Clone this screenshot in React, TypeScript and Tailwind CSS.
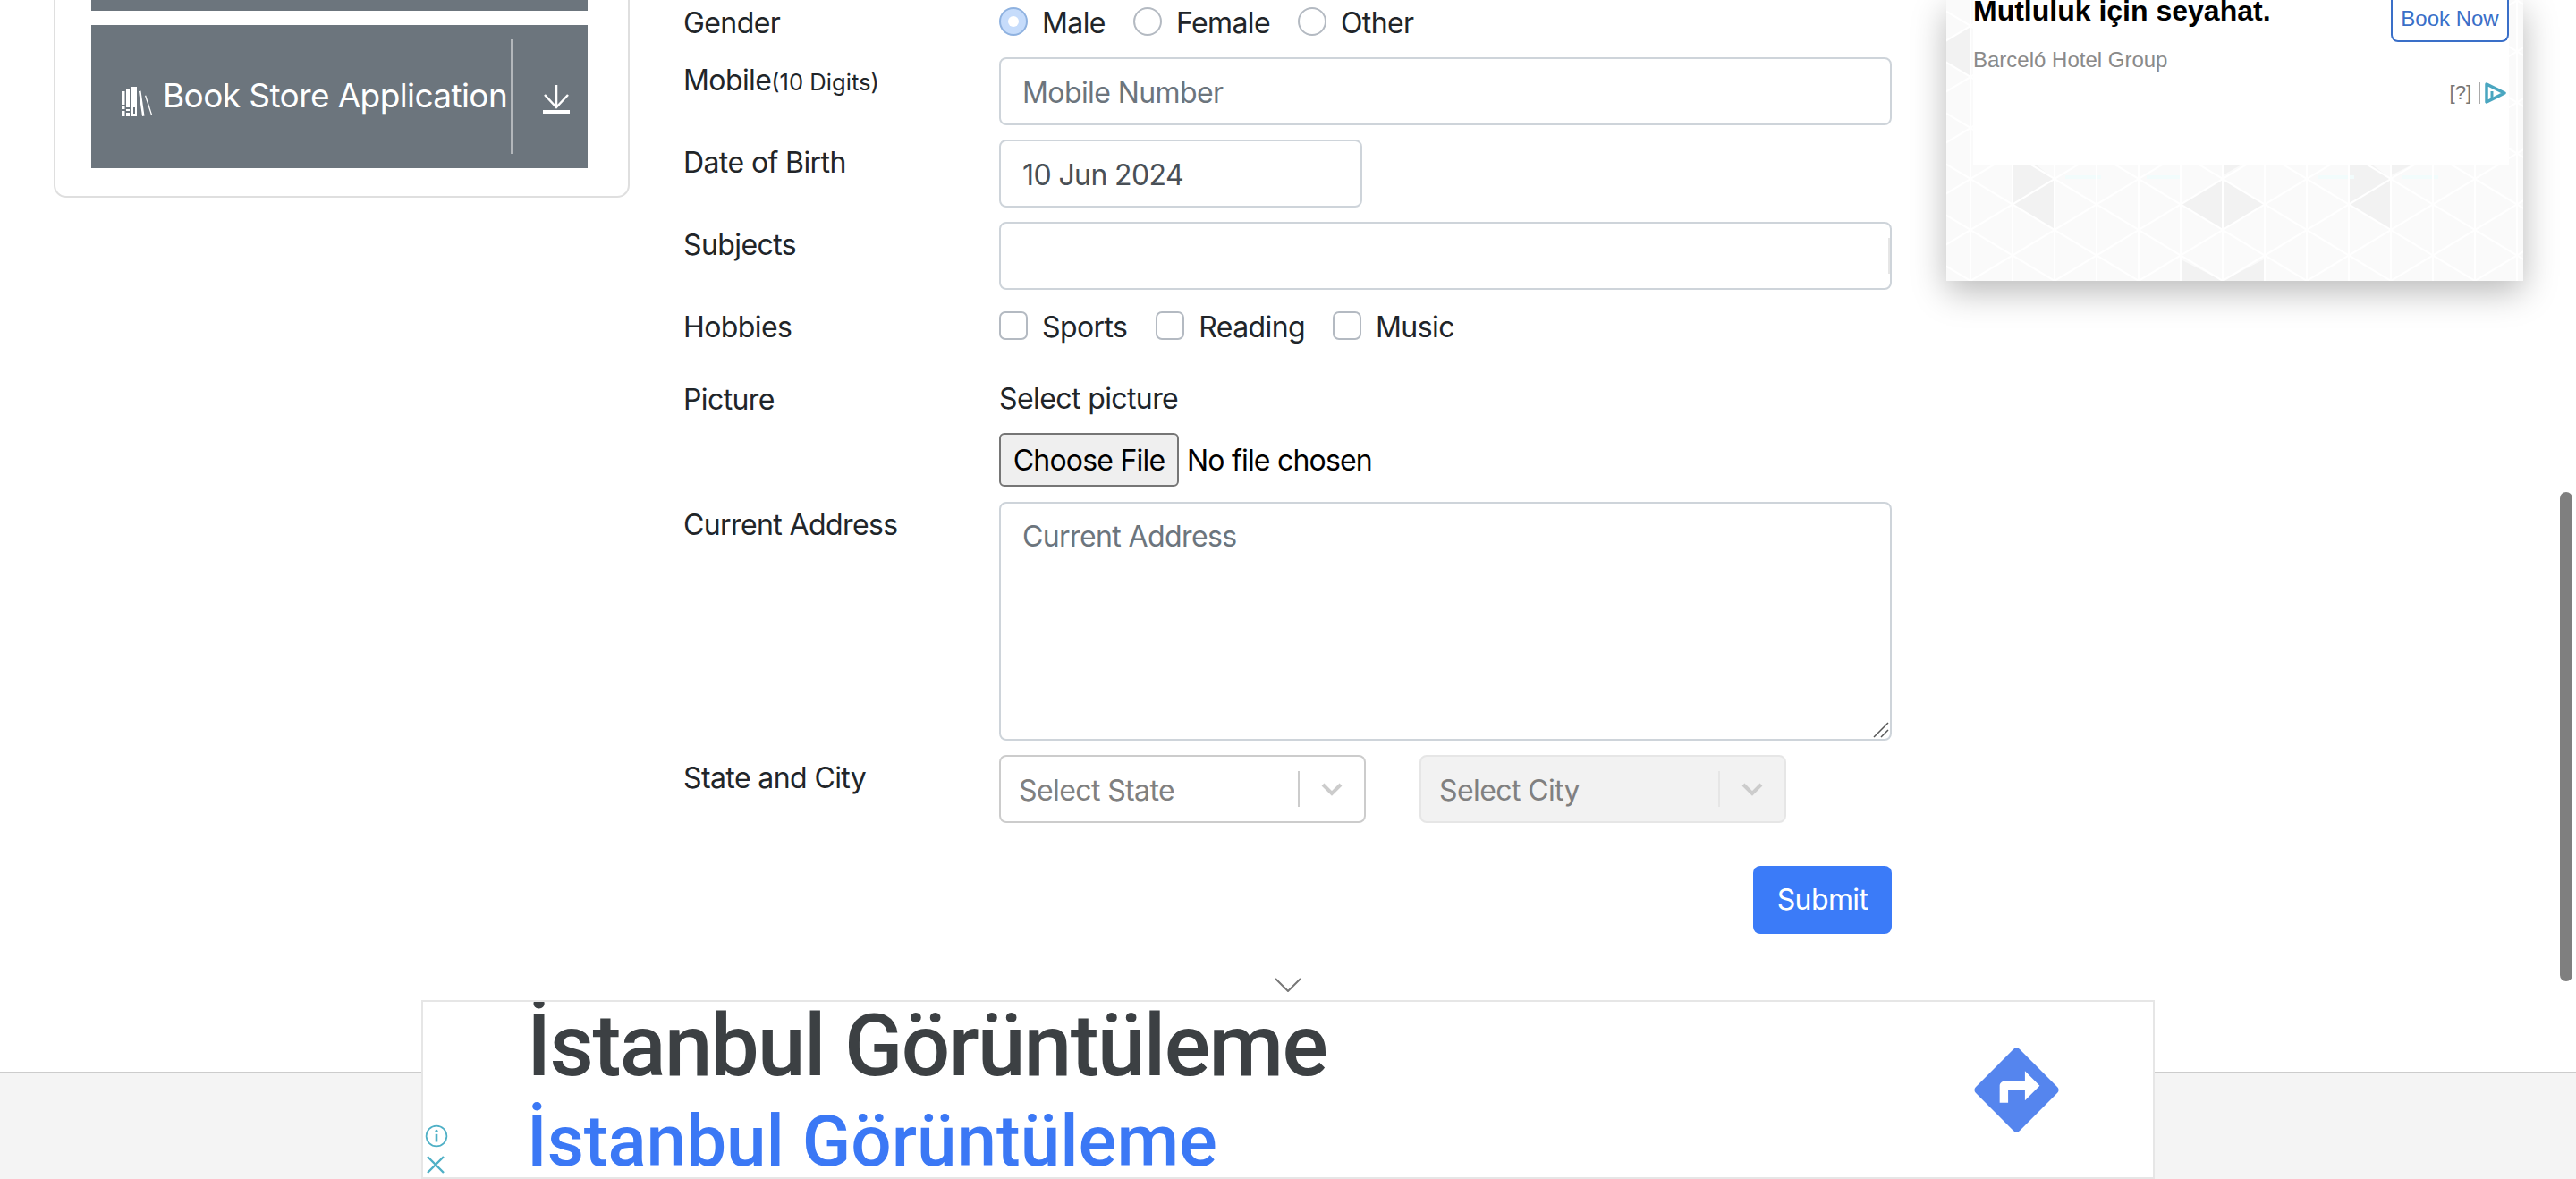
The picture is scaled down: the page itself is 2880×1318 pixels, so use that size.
const sans = "font-['Inter','Liberation_Sans',sans-serif]";
const arial = "font-['Liberation_Sans',Arial,sans-serif]";

function Label({ children }: { children: React.ReactNode }) {
  return <div className="w-[353px] h-[48px] shrink-0 text-[32px] leading-[51px] text-[#212529]">{children}</div>;
}

function Radio({ label, checked, gap }: { label: string; checked?: boolean; gap: string }) {
  return (
    <div className={`flex items-center ${gap}`}>
      {checked ? (
        <span className="w-[32px] h-[32px] rounded-full border-2 border-[#8fb2e0] bg-[#c6dcfb] flex items-center justify-center mr-[16px]">
          <span className="w-[12px] h-[12px] rounded-full bg-white" />
        </span>
      ) : (
        <span className="w-[32px] h-[32px] rounded-full border-2 border-[#b4bac2] bg-white mr-[16px]" />
      )}
      <span className="text-[32px] h-[48px] leading-[51px] text-[#212529]">{label}</span>
    </div>
  );
}

function Check({ label, gap }: { label: string; gap: string }) {
  return (
    <div className={`flex items-center ${gap}`}>
      <span className="w-[32px] h-[32px] rounded-[7px] border-2 border-[#b4bac2] bg-white mr-[16px]" />
      <span className="text-[32px] h-[48px] leading-[51px] text-[#212529]">{label}</span>
    </div>
  );
}

function Select({ label, disabled, width }: { label: string; disabled?: boolean; width: string }) {
  return (
    <div
      className={`${width} h-[76px] rounded-[8px] border-2 flex items-center pl-[20px] ${
        disabled ? "bg-[#f2f2f2] border-[#e6e6e6]" : "bg-white border-[#cccccc]"
      }`}
    >
      <span className="flex-1 text-[32px] leading-[51px] h-[48px] text-[#808080]">{label}</span>
      <span className={`w-[2px] h-[40px] ${disabled ? "bg-[#e6e6e6]" : "bg-[#cccccc]"}`} />
      <span className="w-[72px] flex justify-center">
        <svg width="28" height="18" viewBox="0 0 28 18" fill="none">
          <path d="M4 4l10 10L24 4" stroke="#cccccc" strokeWidth="4" />
        </svg>
      </span>
    </div>
  );
}

function Books() {
  return (
    <svg width="36" height="34" viewBox="0 0 36 34" className="shrink-0 mr-[10px] mt-[10px]" fill="white">
      <path d="M0 6h3.5v15H0zM0 23h3.5v3H0zM0 28h3.5v6H0z" />
      <path d="M5 4h4v20H5zM5 26h4v2H5zM5 30h4v4H5z" />
      <path fillRule="evenodd" d="M11 1h6v33h-6zM13 24v7h2v-7z" />
      <path d="M19 6l2.5-.5 4 28-2.500 .5z" />
      <path d="M26 11l1.200-.4 7 22-1.200 .4z" />
    </svg>
  );
}

function TrianglePattern() {
  return (
    <svg className="absolute inset-0 w-full h-full" preserveAspectRatio="none">
      <defs>
        <pattern id="tri" width="94" height="57" patternUnits="userSpaceOnUse" patternTransform="translate(27 29)">
          <path d="M0 0L94 57M94 0L0 57M0 0v57M47 0v57M94 0v57" stroke="#ffffff" strokeWidth="2" fill="none" />
        </pattern>
      </defs>
      <rect width="100%" height="100%" fill="#fafafa" />
      <g fill="#f2f2f2">
        <path d="M-20 57.500L27 29V86z" />
        <path d="M74 228.500L121 200V257z" />
        <path d="M74 184V228.500L121 200L100 184z" />
        <path d="M262 228.500L309 200V257z" />
        <path d="M309 200L356 228.500L309 257z" />
        <path d="M309 184H330L309 196z" />
        <path d="M450 228.500L497 200V257z" />
        <path d="M450 184V228.500L497 200L476 184z" />
        <path d="M262 290L309 314H262z" />
        <path d="M355 290L309 314H355z" />
        <path d="M497 184H521L497 196z" />
      </g>
      <g fill="#f2fcfc">
        <rect x="133" y="196" width="40" height="4" />
        <rect x="224" y="196" width="40" height="4" />
        <rect x="416" y="196" width="40" height="4" />
        <rect x="510" y="196" width="40" height="4" />
      </g>
      <rect width="100%" height="100%" fill="url(#tri)" />
    </svg>
  );
}

export default function App() {
  return (
    <div className={`relative w-[2880px] h-[1318px] overflow-hidden bg-white flex flex-col tracking-[-0.6px] ${sans}`}>
      <main className="flex h-[1198px] shrink-0 pl-[60px]">
        {/* Left navigation card */}
        <aside className="w-[644px] h-[221px] shrink-0 border-2 border-t-0 border-[#dfdfdf] rounded-b-[14px] pl-[40px] pr-[45px]">
          <div className="h-[12px] bg-[#6c757d]" />
          <div className="h-[160px] mt-[16px] bg-[#6c757d] flex items-center pl-[34px] text-white">
            <Books />
            <span className="text-[37px] leading-[48px] whitespace-nowrap w-[389px] mb-[3px]">Book Store Application</span>
            <span className="w-[2px] h-[128px] bg-[#b3b7bb]" />
            <svg width="30" height="32" viewBox="0 0 30 32" className="ml-[34px] mt-[6px]" fill="none" stroke="white" strokeWidth="2.5">
              <path d="M15 0v24M2 11l13 14 13-14" />
              <path d="M0 30h30" strokeWidth="4" />
            </svg>
          </div>
        </aside>

        {/* Form */}
        <section className="w-[1351px] ml-[60px] shrink-0">
          <div className="flex mb-[16px]">
            <Label>Gender</Label>
            <div className="flex">
              <Radio label="Male" checked gap="mr-[31px]" />
              <Radio label="Female" gap="mr-[31px]" />
              <Radio label="Other" gap="" />
            </div>
          </div>
          <div className="flex mb-[16px]">
            <Label>
              Mobile<span className="text-[25.6px] tracking-normal">(10 Digits)</span>
            </Label>
            <div className="flex-1 h-[76px] rounded-[8px] border-2 border-[#ced4da] flex items-center px-[24px] text-[32px] leading-[51px] text-[#6c757d]">
              <span className="h-[48px]">Mobile Number</span>
            </div>
          </div>
          <div className="flex mb-[16px]">
            <Label>Date of Birth</Label>
            <div className="w-[406px] h-[76px] rounded-[8px] border-2 border-[#ced4da] flex items-center px-[24px] text-[32px] leading-[51px] text-[#495057]">
              <span className="h-[48px]">10 Jun 2024</span>
            </div>
          </div>
          <div className="flex mb-[16px]">
            <Label>Subjects</Label>
            <div className="flex-1 h-[76px] rounded-[8px] border-2 border-[#ced4da] flex justify-end items-center">
              <span className="w-[2px] h-[40px] bg-[#e6e6e6]" />
            </div>
          </div>
          <div className="flex mb-[33px]">
            <Label>Hobbies</Label>
            <div className="flex">
              <Check label="Sports" gap="mr-[32px]" />
              <Check label="Reading" gap="mr-[31px]" />
              <Check label="Music" gap="" />
            </div>
          </div>
          <div className="flex mb-[17px]">
            <Label>Picture</Label>
            <div>
              <div className="text-[32px] h-[48px] leading-[49px] text-[#212529] mb-[15px]">Select picture</div>
              <div className="flex items-center h-[60px]">
                <div className="w-[201px] h-[60px] rounded-[6px] border-2 border-[#767676] bg-[#efefef] flex items-center justify-center text-[32px] leading-[56px] tracking-[-0.8px] text-black pt-[1px]">
                  Choose File
                </div>
                <span className="ml-[9px] h-[60px] text-[32px] leading-[62px] tracking-[-0.8px] text-black">No file chosen</span>
              </div>
            </div>
          </div>
          <div className="flex mb-[16px]">
            <Label>Current Address</Label>
            <div className="relative flex-1 h-[267px] rounded-[8px] border-2 border-[#ced4da] px-[24px] pt-[11px] text-[32px] leading-[51px] text-[#6c757d]">
              Current Address
              <svg width="20" height="20" viewBox="0 0 20 20" className="absolute right-[1px] bottom-[1px]" stroke="#555555" strokeWidth="1.5" fill="none">
                <path d="M3 19L19 3M11 19l8-8" />
              </svg>
            </div>
          </div>
          <div className="flex mb-[48px]">
            <Label>State and City</Label>
            <div className="flex gap-[60px]">
              <Select label="Select State" width="w-[410px]" />
              <Select label="Select City" disabled width="w-[410px]" />
            </div>
          </div>
          <div className="flex justify-end">
            <div className="w-[155px] h-[76px] rounded-[8px] bg-[#3b7bf8] flex items-center justify-center text-[32px] leading-[78px] text-white">
              Submit
            </div>
          </div>
        </section>

        {/* Right ad */}
        <aside className={`relative w-[645px] h-[314px] ml-[61px] shrink-0 shadow-[0_12px_36px_rgba(0,0,0,0.28)] px-[30px] tracking-normal ${arial}`}>
          <TrianglePattern />
          <div className="relative w-[599px] h-[184px] bg-white">
            <div className="flex justify-between items-start">
              <div className="text-[32px] leading-[32px] font-bold text-black mt-[-4px] whitespace-nowrap">Mutluluk için seyahat.</div>
              <div className="w-[132px] h-[47px] rounded-b-[8px] border-2 border-t-0 border-[#3a6fc8] flex items-center justify-center text-[24px] text-[#3a6fc8] pb-[3px]">
                Book Now
              </div>
            </div>
            <div className="absolute left-0 top-[53px] text-[24px] leading-[28px] text-[#8a8a8a]">Barceló Hotel Group</div>
            <div className="absolute right-[3px] top-[92px] flex items-center">
              <span className="text-[22px] leading-[24px] text-[#777777]">[?]</span>
              <span className="w-[1px] h-[24px] bg-[#aaaaaa] ml-[9px] mr-[5px]" />
              <svg width="24" height="24" viewBox="0 0 24 24" fill="none">
                <path d="M2 2l20 10L2 22z" stroke="#4aa6c0" strokeWidth="3.5" strokeLinejoin="round" />
                <path d="M8 10v8" stroke="#4aa6c0" strokeWidth="3" />
              </svg>
            </div>
          </div>
        </aside>
      </main>

      <footer className="flex-1 bg-[#f4f4f4] border-t-2 border-[#cccccc]" />

      {/* Overlay scrollbar */}
      <div className="absolute left-[2862px] top-[550px] w-[14px] h-[547px] rounded-full bg-[#7f7f7f]" />

      {/* Sticky bottom ad */}
      <div className="absolute left-[471px] top-[1118px] w-[1938px] h-[200px] bg-white border-2 border-[#e6e6e6] overflow-hidden font-['Roboto',sans-serif]">
        <div className="absolute left-[116px] top-[1px] text-[96px] leading-[96px] tracking-[-1.6px] text-[#3c4043] whitespace-nowrap font-medium">İstanbul Görüntüleme</div>
        <div className="absolute left-[116px] top-[116px] text-[80px] leading-[80px] tracking-normal text-[#3b78f5] whitespace-nowrap font-medium">İstanbul Görüntüleme</div>
        <svg width="26" height="26" viewBox="0 0 24 24" className="absolute left-[2px] top-[137px]" fill="none" stroke="#4fb0c6" strokeWidth="1.6">
          <circle cx="12" cy="12" r="10.5" />
          <path d="M12 10v8" strokeWidth="2.4" />
          <circle cx="12" cy="6.8" r="1.4" fill="#4fb0c6" stroke="none" />
        </svg>
        <svg width="22" height="20" viewBox="0 0 22 20" className="absolute left-[3px] top-[172px]" stroke="#4fb0c6" strokeWidth="2.4" fill="none">
          <path d="M2 1l18 18M20 1L2 19" />
        </svg>
        <svg width="113" height="113" viewBox="0 0 24 24" className="absolute left-[1725px] top-[42px]" fill="#5585ee">
          <path d="M21.71 11.29l-9-9a.996.996 0 0 0-1.41 0l-9 9a.996.996 0 0 0 0 1.41l9 9c.39.39 1.02.39 1.41 0l9-9a.996.996 0 0 0 0-1.41zM14 14.5V12h-4v3H8v-4c0-.55.45-1 1-1h5V7.5l3.5 3.5-3.5 3.5z" />
        </svg>
      </div>
      {/* Collapse chevron over the ad */}
      <svg width="30" height="16" viewBox="0 0 30 16" className="absolute left-[1425px] top-[1093px]" fill="none" stroke="#777777" strokeWidth="2">
        <path d="M1 1l14 14L29 1" />
      </svg>
    </div>
  );
}
